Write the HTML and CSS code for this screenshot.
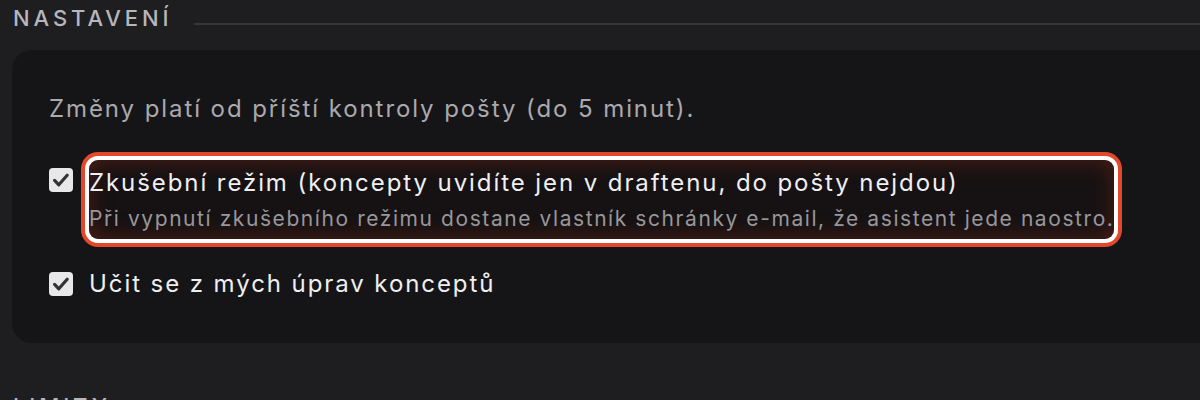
FILE: index.html
```html
<!DOCTYPE html>
<html lang="cs">
<head>
<meta charset="utf-8">
<title>Nastavení</title>
<link rel="stylesheet" href="styles.css">
</head>
<body>
<section class="section">
  <div class="section-head">
    <h2 class="section-title">Nastavení</h2>
    <div class="section-rule"></div>
  </div>
  <div class="card">
    <p class="intro">Změny platí od příští kontroly pošty (do 5 minut).</p>
    <div class="option option-first">
      <span class="check"><svg viewBox="0 0 24 24" width="24" height="24"><path d="M5.6 12.4 L9.8 16.8 L18.2 7.2" fill="none" stroke="#333335" stroke-width="3.2" stroke-linecap="round" stroke-linejoin="round"/></svg></span>
      <div class="option-text highlight">
        <div class="option-label">Zkušební režim (koncepty uvidíte jen v draftenu, do pošty nejdou)</div>
        <div class="option-help">Při vypnutí zkušebního režimu dostane vlastník schránky e-mail, že asistent jede naostro.</div>
      </div>
    </div>
    <div class="option option-second">
      <span class="check"><svg viewBox="0 0 24 24" width="24" height="24"><path d="M5.6 12.4 L9.8 16.8 L18.2 7.2" fill="none" stroke="#333335" stroke-width="3.2" stroke-linecap="round" stroke-linejoin="round"/></svg></span>
      <div class="option-text">
        <div class="option-label">Učit se z mých úprav konceptů</div>
      </div>
    </div>
  </div>
</section>
<section class="section">
  <div class="section-head">
    <h2 class="section-title">Limity</h2>
    <div class="section-rule"></div>
  </div>
</section>
</body>
</html>
```

FILE: styles.css
```css
html, body {
  margin: 0;
  padding: 0;
  background: #1e1e21;
  overflow: hidden;
}
body {
  font-family: Inter, "Noto Sans", "DejaVu Sans", sans-serif;
  color: #ececee;
}
.section {
  padding: 5px 0 0 12px;
}
.section-head {
  display: flex;
  align-items: flex-start;
  gap: 22px;
}
.section-title {
  margin: 0;
  font-size: 22px;
  line-height: 26px;
  font-weight: 500;
  letter-spacing: 3.9px;
  text-transform: uppercase;
  color: #b6b6bc;
  padding-left: 1px;
}
.section-rule {
  flex: 1;
  height: 2px;
  margin-top: 18px;
  background: #35353a;
}
.card {
  margin-top: 19px;
  margin-right: -40px;
  margin-bottom: 45px;
  background: #151517;
  border-radius: 20px;
  padding: 42px 37px 42px 37px;
}
.intro {
  margin: 0;
  font-size: 24px;
  line-height: 34px;
  letter-spacing: 0.08em;
  color: #a9a9ae;
}
.option {
  display: flex;
  align-items: flex-start;
  gap: 16px;
}
.option-first {
  margin-top: 34px;
}
.option-second {
  margin-top: 28px;
}
.check {
  flex: none;
  width: 24px;
  height: 24px;
  border-radius: 4px;
  background: #e8e8ea;
  display: block;
}
.check svg {
  display: block;
}
.option-first .check {
  margin-top: 8px;
}
.option-second .check {
  margin-top: 5px;
}
.option-text {
  width: fit-content;
}
.highlight {
  padding: 6px 0 5px 0;
  border-radius: 9px;
  box-shadow: 0 0 0 4px #ffffff, 0 0 0 8px #e4482c, inset 0 0 22px rgba(150, 45, 25, 0.45);
  background: #161213;
}
.option-label {
  font-size: 24px;
  line-height: 34px;
  letter-spacing: 0.08em;
  color: #efeff1;
}
.option-help {
  margin-top: 4px;
  font-size: 21px;
  line-height: 30px;
  letter-spacing: 0.075em;
  color: #97979c;
}
```
